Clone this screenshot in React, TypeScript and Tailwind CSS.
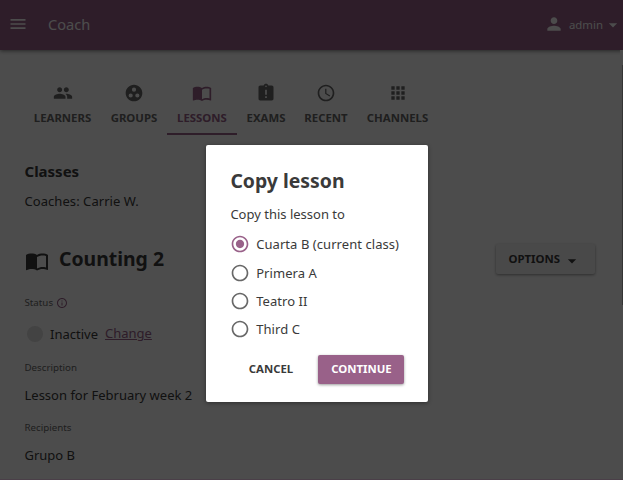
import type { ReactNode } from 'react';
import {
  MdMenu, MdPerson, MdArrowDropDown, MdPeople, MdGroupWork, MdImportContacts,
  MdAssignmentLate, MdAccessTime, MdApps, MdInfoOutline,
  MdRadioButtonChecked, MdRadioButtonUnchecked,
} from 'react-icons/md';

function Tab({ icon, label, width, active }: { icon: ReactNode; label: string; width: string; active?: boolean }) {
  return (
    <div
      className={`flex h-[62px] flex-col items-center border-b-2 pt-[10px] ${width} ${
        active ? 'border-[#996189] text-[#996189]' : 'border-transparent text-[#686868]'
      }`}
    >
      <span className="flex h-5 items-center">{icon}</span>
      <span className="mt-[6px] text-[11.38px] leading-[18px] font-bold whitespace-nowrap">{label}</span>
    </div>
  );
}

function Radio({ label, checked }: { label: string; checked?: boolean }) {
  return (
    <label className="flex h-[28.4px] items-center">
      {checked ? (
        <MdRadioButtonChecked className="size-5 shrink-0 text-[#996189]" />
      ) : (
        <MdRadioButtonUnchecked className="size-5 shrink-0 text-[#686868]" />
      )}
      <span className="ml-[6.7px] text-[13px] leading-5 tracking-[0.06px] whitespace-nowrap">{label}</span>
    </label>
  );
}

export default function App() {
  return (
    <div className="relative h-[480px] w-full overflow-hidden bg-white font-['Noto_Sans',sans-serif] text-[13px] text-[#3a3a3a]">
      <header className="flex h-[50px] items-center bg-[#996189] text-white shadow-[0_1px_4px_rgba(0,0,0,0.5)]">
        <MdMenu className="mb-[2px] ml-2 size-5" />
        <span className="ml-5 pb-[2px] text-[14.6px] leading-5">Coach</span>
        <MdPerson className="mb-[3px] ml-auto size-5" />
        <span className="ml-[5px] text-[11.4px]">admin</span>
        <MdArrowDropDown className="mb-px size-5" />
      </header>

      <div className="flex h-[430px]">
        <main className="min-w-0 flex-1 pr-[21px] pl-[24.5px]">
          <nav className="mt-[23px] -ml-[0.5px] flex">
            <Tab width="w-[77px]" label="LEARNERS" icon={<MdPeople className="size-5" />} />
            <Tab width="w-[66px]" label="GROUPS" icon={<MdGroupWork className="size-5" />} />
            <Tab width="w-[70px]" label="LESSONS" active icon={<MdImportContacts className="size-5" />} />
            <Tab width="w-[58px]" label="EXAMS" icon={<MdAssignmentLate className="size-5" />} />
            <Tab width="w-[62px]" label="RECENT" icon={<MdAccessTime className="size-5" />} />
            <Tab width="w-[81px]" label="CHANNELS" icon={<MdApps className="size-5" />} />
          </nav>
          <h2 className="mt-[26px] text-[15px] leading-[20px] font-bold">Classes</h2>
          <p className="mt-[10px] leading-5 tracking-[0.06px]">Coaches: Carrie W.</p>
          <div className="mt-[33px] flex h-[30px] items-center">
            <MdImportContacts className="mt-[3px] size-6" />
            <h1 className="ml-[10.5px] text-[19.4px] leading-[30px] font-bold">Counting 2</h1>
            <button className="mr-1 ml-auto flex h-[30px] w-[99px] items-center rounded-[2px] bg-[#f5f5f5] pl-[12.5px] text-[11.38px] font-bold shadow-[0_1px_3px_rgba(0,0,0,0.4)]">
              OPTIONS
              <MdArrowDropDown className="mt-[3px] ml-[1.5px] size-5" />
            </button>
          </div>
          <div className="mt-[20px] flex h-[18px] items-center text-[9.75px] text-[#686868]">
            Status <MdInfoOutline className="mb-px ml-[3px] size-3 text-[#996189]" />
          </div>
          <div className="mt-[12px] flex h-5 items-center">
            <span className="ml-[2px] size-[16px] rounded-full bg-[#e0e0e0]" />
            <span className="ml-[7.5px] pt-px">Inactive</span>
            <a className="ml-[7px] text-[#996189] underline">Change</a>
          </div>
          <div className="mt-[15px] text-[9.75px] leading-[18px] text-[#686868]">Description</div>
          <p className="mt-[8px] leading-5">Lesson for February week 2</p>
          <div className="mt-[14px] text-[9.75px] leading-[18px] text-[#686868]">Recipients</div>
          <p className="mt-[8px] leading-5">Grupo B</p>
        </main>
        <div className="flex w-[3px] justify-end bg-[#fafafa] pt-[15px]">
          <div className="h-[240px] w-px bg-[#b0b0b0]" />
        </div>
      </div>

      <div className="absolute inset-0 border-b border-[#4a3f48] bg-black/70">
        <div
          role="dialog"
          className="mt-[145.4px] ml-[206px] h-[257px] w-[222px] rounded-[2px] bg-white pt-[20.6px] pr-[23.5px] pl-[24.4px] shadow-[0_1px_4px_rgba(0,0,0,0.4)]"
        >
          <h1 className="text-[19.4px] leading-[30px] font-bold">Copy lesson</h1>
          <p className="mt-[8px] mb-[6px] leading-5">Copy this lesson to</p>
          <div className="-ml-[0.9px]">
            <Radio label="Cuarta B (current class)" checked />
            <Radio label="Primera A" />
            <Radio label="Teatro II" />
            <Radio label="Third C" />
          </div>
          <div className="mt-[11px] flex h-[29px] text-[11.38px] leading-[28px] font-bold">
            <button className="ml-[5.6px] w-[70px] pb-px">CANCEL</button>
            <button className="ml-[12px] w-[86px] rounded-[2px] bg-[#996189] pb-px pl-px text-white shadow-[0_1px_3px_rgba(0,0,0,0.4)]">
              CONTINUE
            </button>
          </div>
        </div>
      </div>
    </div>
  );
}
